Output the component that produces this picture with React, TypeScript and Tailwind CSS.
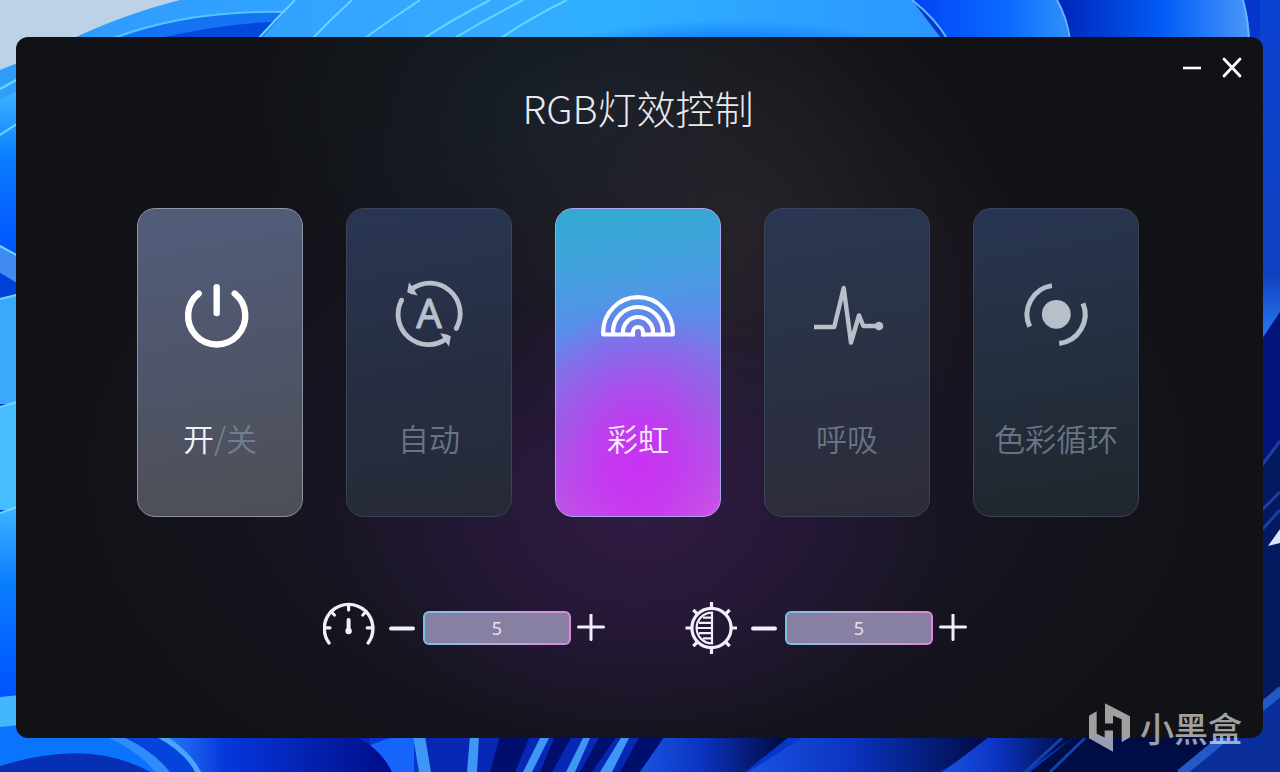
import { useState } from "react";
import type { ReactNode } from "react";

type Mode = {
  id: string;
  label: ReactNode;
  icon: ReactNode;
  card: string;
};

const idleCard = "border-[#3b4358] text-[#697483]";

const modes: Mode[] = [
  {
    id: "power",
    label: (
      <>
        <span className="text-[#eef2fa]">开</span>/关
      </>
    ),
    icon: <PowerIcon />,
    card: "border-[#8f94a3] bg-linear-170 from-[#525d7b] via-[#4f556a] to-[#4d4f54] text-[#6d7f90]",
  },
  {
    id: "auto",
    label: "自动",
    icon: <AutoIcon />,
    card: `${idleCard} bg-linear-170 from-[#293653] via-[#272e42] to-[#262a37]`,
  },
  {
    id: "rainbow",
    label: "彩虹",
    icon: <RainbowIcon />,
    card: "border-[#a7a6ee] text-[#fbeaff] bg-[radial-gradient(ellipse_75%_54%_at_50%_84%,#cb31f3_0%,#c634f2d0_30%,#b840f070_65%,#a84cf000_100%),linear-gradient(172deg,#2fabd0_0%,#46a0df_22%,#5690ea_36%,#7b78e6_52%,#9469de_68%,#b65ce2_84%,#d95fdd_100%)]",
  },
  {
    id: "breath",
    label: "呼吸",
    icon: <PulseIcon />,
    card: `${idleCard} bg-linear-170 from-[#2a3753] via-[#2a3143] to-[#2d2b39]`,
  },
  {
    id: "cycle",
    label: "色彩循环",
    icon: <CycleIcon />,
    card: `${idleCard} bg-linear-170 from-[#293653] via-[#242e3e] to-[#20262c]`,
  },
];

function PowerIcon() {
  return (
    <svg viewBox="0 0 80 80" className="size-20" fill="none" stroke="#fff" strokeWidth="6.4" strokeLinecap="round">
      <path d="M18.7 18.6A28.6 28.6 0 1 0 54.7 18.6" />
      <path d="M36.7 12.2V38" />
    </svg>
  );
}

function AutoIcon() {
  return (
    <svg viewBox="0 0 80 80" className="size-20" fill="none" stroke="#b9c0cb" strokeWidth="4.8">
      <path d="M22.5 14.4A30.3 30.3 0 0 1 67.2 53.5" />
      <path d="M12.6 25.2A30.3 30.3 0 0 0 57.3 63.8" />
      <circle cx="67.2" cy="53.5" r="2.4" fill="#b9c0cb" stroke="none" />
      <circle cx="12.6" cy="25.2" r="2.4" fill="#b9c0cb" stroke="none" />
      <path d="M18.2 17.2L20 7.2L23 11.2L28.6 20.4L22 19z" fill="#b9c0cb" stroke="none" />
      <path d="M61.8 61.2L60 71.4L57 67.4L51.2 58.2L58 59.6z" fill="#b9c0cb" stroke="none" />
      <text
        x="40"
        y="53"
        textAnchor="middle"
        fill="#b9c0cb"
        stroke="#b9c0cb"
        strokeWidth="1"
        strokeLinejoin="round"
        className="font-['Noto_Sans'] text-[40px] font-normal"
      >
        A
      </text>
    </svg>
  );
}

function RainbowIcon() {
  return (
    <svg viewBox="0 0 80 80" className="size-20" fill="none" stroke="#fff" strokeWidth="4.2" strokeLinejoin="round">
      <path d="M35 59.5H5.2V57a34.8 34.8 0 0 1 69.6 0v2.5H45" />
      <path d="M15 59V57a25 25 0 0 1 50 0v2" />
      <path d="M25 59V57a15 15 0 0 1 30 0v2" />
      <path d="M35 61.4V57a5 5 0 0 1 10 0v4.4" />
    </svg>
  );
}

function PulseIcon() {
  return (
    <svg viewBox="0 0 80 80" className="size-20" fill="none" stroke="#b9bfc9" strokeWidth="4.4" strokeLinejoin="round">
      <path d="M7 52H27.2L36.7 13L44 67.6L52 40.4L56.3 51H72" />
      <circle cx="72" cy="51" r="4.3" fill="#b9bfc9" stroke="none" />
    </svg>
  );
}

function CycleIcon() {
  return (
    <svg viewBox="0 0 80 80" className="size-20" fill="none" stroke="#b6bfca" strokeWidth="5">
      <circle cx="40.3" cy="39.3" r="14.4" fill="#b6bfca" stroke="none" />
      <path d="M35.9 10.6A29.2 29.2 0 0 0 13.7 51.6" />
      <path d="M67 28.4A29.2 29.2 0 0 1 43.2 68.4" />
    </svg>
  );
}

function GaugeIcon() {
  return (
    <svg viewBox="0 0 52 52" className="size-[52px] shrink-0" fill="none" stroke="#f1f0fa" strokeWidth="3.4" strokeLinecap="round">
      <path d="M6 41A24.3 24.3 0 1 1 45.2 41" />
      <path d="M25.6 3V8M8 9.5L11.4 13M43.2 9.5L39.8 13M2.6 25.8H7M48.6 25.8H44.2" strokeWidth="3.2" />
      <path d="M25.6 18V28" strokeWidth="4" />
      <circle cx="25.6" cy="29" r="3.2" fill="#f1f0fa" stroke="none" />
    </svg>
  );
}

function BrightnessIcon() {
  return (
    <svg viewBox="0 0 52 52" className="size-[52px] shrink-0" fill="none" stroke="#f1f0fa" strokeWidth="3.2">
      <circle cx="26.5" cy="26" r="19.6" />
      <path d="M26.5 0V6M26.5 46V52M0.5 26H6M47 26H52M8.3 7.8L12.5 12M44.7 7.8L40.5 12M8.3 44.2L12.5 40M44.7 44.2L40.5 40" />
      <path d="M27 10.6V41.4A15.4 15.4 0 0 1 27 10.6z" strokeWidth="2.2" />
      <path d="M18 15.6H27M14 20.8H27M12 26H27M14 31.2H27M18 36.4H27" strokeWidth="2.2" />
    </svg>
  );
}

function BoxLogo() {
  return (
    <svg viewBox="0 0 123 146" className="h-[49px] w-[41px]" fill="#fff">
      <path d="M0 38L23 24V92L47 103V82H72V146L0 105z" />
      <path d="M48 0L123 39V102L98 117V48L72 37V61H48z" />
    </svg>
  );
}

function Stepper({ label, icon }: { label: string; icon: ReactNode }) {
  const [value, setValue] = useState(5);
  return (
    <div className="flex items-center">
      {icon}
      <button
        aria-label={`${label} -`}
        onClick={() => setValue(Math.max(0, value - 1))}
        className="ml-3.5 flex h-7 w-[26px] cursor-pointer items-center"
      >
        <svg viewBox="0 0 26 28" className="h-7 w-[26px]" stroke="#f1f0fa" strokeWidth="4" strokeLinecap="round">
          <path d="M2 14.5H24" />
        </svg>
      </button>
      <div className="ml-2 rounded-md bg-linear-to-r from-[#6fc3e6] via-[#b9a9dc] to-[#dc86dc] p-0.5">
        <input
          aria-label={label}
          value={value}
          readOnly
          className="block h-[30px] w-36 rounded-sm bg-[#8780a2] text-center font-['Noto_Sans',sans-serif] text-lg text-[#e6e0f4] outline-none"
        />
      </div>
      <button
        aria-label={`${label} +`}
        onClick={() => setValue(Math.min(10, value + 1))}
        className="ml-1.5 size-7 cursor-pointer"
      >
        <svg viewBox="0 0 28 28" className="size-7" stroke="#f1f0fa" strokeWidth="3" strokeLinecap="round">
          <path d="M1.5 13H26.5M14 0.5V25.5" />
        </svg>
      </button>
    </div>
  );
}

function Wallpaper() {
  return (
    <svg viewBox="0 0 1280 772" preserveAspectRatio="none" className="absolute inset-0 h-full w-full">
      <defs>
        <linearGradient id="top" x1="0" x2="1">
          <stop offset="0" stopColor="#2e9bff" />
          <stop offset="0.45" stopColor="#35a8ff" />
          <stop offset="0.62" stopColor="#2fb0ff" />
          <stop offset="1" stopColor="#2a96ff" />
        </linearGradient>
        <radialGradient id="topShade" cx="0.5" cy="1" r="0.5">
          <stop offset="0" stopColor="#0668ff" />
          <stop offset="1" stopColor="#0668ff" stopOpacity="0" />
        </radialGradient>
        <linearGradient id="petal" x1="0" x2="1">
          <stop offset="0" stopColor="#0043f5" />
          <stop offset="0.6" stopColor="#0a6aff" />
          <stop offset="1" stopColor="#2f90fa" />
        </linearGradient>
        <linearGradient id="petalDark" x1="0" x2="1">
          <stop offset="0" stopColor="#0025b8" />
          <stop offset="0.55" stopColor="#005cf5" />
          <stop offset="1" stopColor="#4a98fb" />
        </linearGradient>
        <linearGradient id="left" x1="0" x2="0" y1="0" y2="1">
          <stop offset="0" stopColor="#3fb5ff" />
          <stop offset="0.4" stopColor="#0a7dff" />
          <stop offset="1" stopColor="#0050ff" />
        </linearGradient>
        <linearGradient id="right" x1="0" x2="0" y1="0" y2="1">
          <stop offset="0" stopColor="#0a43d2" />
          <stop offset="0.8" stopColor="#1040c0" />
          <stop offset="1" stopColor="#2a7cf5" />
        </linearGradient>
        <linearGradient id="stem" x1="0" x2="1">
          <stop offset="0" stopColor="#2f86ff" />
          <stop offset="0.3" stopColor="#0636dc" />
          <stop offset="1" stopColor="#000d86" />
        </linearGradient>
        <linearGradient id="ribbon" x1="0" x2="1">
          <stop offset="0" stopColor="#1a53e0" />
          <stop offset="0.4" stopColor="#0b34c4" />
          <stop offset="1" stopColor="#000736" />
        </linearGradient>
      </defs>
      <rect width="1280" height="772" fill="#0636cc" />

      {/* sky and top petals */}
      <path d="M0 0H190L60 45L20 70L0 80z" fill="#bcd2e6" />
      <path d="M180 0H912L950 50H50Q110 18 180 0z" fill="url(#top)" />
      <rect x="560" y="-10" width="340" height="60" fill="url(#topShade)" />
      <path d="M113 40Q190 10 285 12L258 42z" fill="#1473f2" />
      <path d="M160 38Q220 24 272 22L256 42z" fill="#0048df" />
      <path d="M113 38Q190 10 285 12" fill="none" stroke="#54c4ff" strokeWidth="2" />
      <path d="M295 0Q275 20 257 40M352 0Q330 20 311 40M420 0Q390 20 362 40M490 0Q455 18 421 40M523 0Q485 20 451 40M567 0Q530 18 498 40" fill="none" stroke="#6ad4ff" strokeWidth="2" />
      <path d="M912 0H1057Q1066 18 1069 40H948Q935 18 912 0z" fill="url(#petal)" />
      <path d="M1057 0H1243Q1249 18 1250 40H1069Q1066 18 1057 0z" fill="url(#petalDark)" />
      <path d="M912 0Q935 18 948 40M1057 0Q1067 18 1070 40M1243 0Q1248 18 1249 40" fill="none" stroke="#62b8ff" strokeWidth="2" />

      {/* left edge */}
      <path d="M0 70L20 62V135H0z" fill="#2f9dfa" />
      <path d="M0 100L20 90V260L0 250z" fill="url(#left)" />
      <path d="M0 246L20 258V285L0 273z" fill="#3f8bf0" />
      <path d="M0 273L20 285V298H0z" fill="#0040d8" />
      <path d="M0 298L20 294V404H0z" fill="#3aa9fc" />
      <path d="M0 407L20 401V510H0z" fill="#45bdff" />
      <path d="M0 513L20 506V700H0z" fill="url(#left)" />
      <path d="M0 89L20 78M0 135L20 122M0 246L20 257M0 299L20 294M0 407L20 401M0 513L20 506" stroke="#6fd6f8" strokeWidth="2" />

      {/* bottom */}
      <path d="M0 697L20 695V772H0z" fill="#43b6fd" />
      <path d="M0 727L20 725L110 735L165 772H0z" fill="#0b74ff" />
      <path d="M0 766Q90 738 150 772H0z" fill="#0530b4" />
      <path d="M105 736H122Q155 752 170 772H155Q140 752 105 736z" fill="#2f8cfa" />
      <path d="M125 736H160Q185 752 195 772H170Q155 752 125 736z" fill="#0544dc" />
      <path d="M155 736H355Q380 745 392 772H198Q185 752 155 736z" fill="url(#stem)" />
      <path d="M155 736H166Q191 752 201 772H195Q185 752 155 736z" fill="#4aa4fb" />
      <path d="M355 736H370V745z" fill="#0428c0" />
      <path d="M370 745L395 736H414V772H392Q385 757 370 745z" fill="#1664fb" />
      <path d="M425 736H640V772H430z" fill="#0628b4" />
      <path d="M500 736H530L515 772H490zM555 736H572L552 772H540zM600 736H617L592 772H580zM640 736H665L640 772H620z" fill="#000f6e" />
      <path d="M413 736H425L431 772H419zM470 736H479L477 772H467zM541 736H550L532 772H523zM584 736H591L575 772H566zM622 736H630L612 772H600z" fill="#3f97f5" />
      <path d="M665 736H790L745 772H640z" fill="url(#ribbon)" />
      <path d="M805 736H1000L940 772H748z" fill="url(#ribbon)" />
      <path d="M990 736H1075L1025 772H943z" fill="url(#ribbon)" />
      <path d="M1075 736H1235L1190 772H1030z" fill="#000d45" />
      <path d="M1062 738L1025 772M1085 738L1050 772" stroke="#1243a8" strokeWidth="3" />

      {/* right edge */}
      <path d="M1260 0H1280V312L1260 342z" fill="url(#right)" />
      <path d="M1260 342L1280 312V440L1260 465z" fill="#04147c" />
      <path d="M1260 465L1280 440V772H1260z" fill="#04195f" />
      <path d="M1260 468L1280 441M1260 512L1280 492M1260 532L1280 510" stroke="#1e3f9c" strokeWidth="3" />
      <path d="M1268 546L1280 529V543z" fill="#d7e6fb" />
      <path d="M1180 772L1280 690V772z" fill="#0a2f9a" />
      <path d="M1180 774L1282 690" stroke="#2459c8" strokeWidth="9" />
    </svg>
  );
}

export default function App() {
  const [active, setActive] = useState("rainbow");

  return (
    <div className="relative flex min-h-screen flex-col overflow-hidden pt-[37px] pr-[17px] pb-[34px] pl-4 font-['Noto_Sans_CJK_SC',sans-serif]">
      <Wallpaper />

      <main className="relative flex flex-1 flex-col rounded-xl bg-[#111215] bg-[radial-gradient(ellipse_25%_32%_at_50%_69%,#381c4cb0_0%,#2f1a4490_45%,#20183000_100%),radial-gradient(ellipse_22%_38%_at_58%_28%,#332b3090_0%,#2c263000_100%),radial-gradient(ellipse_26%_30%_at_44%_10%,#1b2632b0_0%,#1b263200_100%),radial-gradient(ellipse_48%_56%_at_50%_62%,#1e1830_0%,#1a172400_100%)] pr-[3px]">
        <header className="flex h-[44px] items-end justify-end gap-3 pr-3.5">
          <button aria-label="最小化" className="cursor-pointer">
            <svg viewBox="0 0 28 28" className="size-7" stroke="#fff" strokeWidth="2.6">
              <path d="M5 15H23" />
            </svg>
          </button>
          <button aria-label="关闭" className="cursor-pointer">
            <svg viewBox="0 0 28 28" className="size-7" stroke="#fff" strokeWidth="2.8" strokeLinecap="round">
              <path d="M6 6L22 23M22 6L6 23" />
            </svg>
          </button>
        </header>

        <h1 className="-mt-0.5 text-center text-[39px] leading-[56px] font-light text-[#e9e9ee]">RGB灯效控制</h1>

        <div className="mt-[73px] flex justify-center gap-[43px]">
          {modes.map((m) => (
            <button
              key={m.id}
              onClick={() => setActive(m.id)}
              aria-pressed={active === m.id}
              className={`flex h-[309px] w-[166px] cursor-pointer flex-col items-center gap-[59px] rounded-[18px] border pt-[66px] text-[31px] leading-[48px] font-[350] ${m.card}`}
            >
              {m.icon}
              <span className="whitespace-nowrap">{m.label}</span>
            </button>
          ))}
        </div>

        <div className="mt-[85px] flex justify-center gap-20 pl-3.5">
          <Stepper label="速度" icon={<GaugeIcon />} />
          <Stepper label="亮度" icon={<BrightnessIcon />} />
        </div>
      </main>

      <div className="absolute right-[38px] bottom-5 flex items-center gap-2.5 opacity-60">
        <BoxLogo />
        <span className="text-[34px] leading-[49px] font-medium text-white">小黑盒</span>
      </div>
    </div>
  );
}
